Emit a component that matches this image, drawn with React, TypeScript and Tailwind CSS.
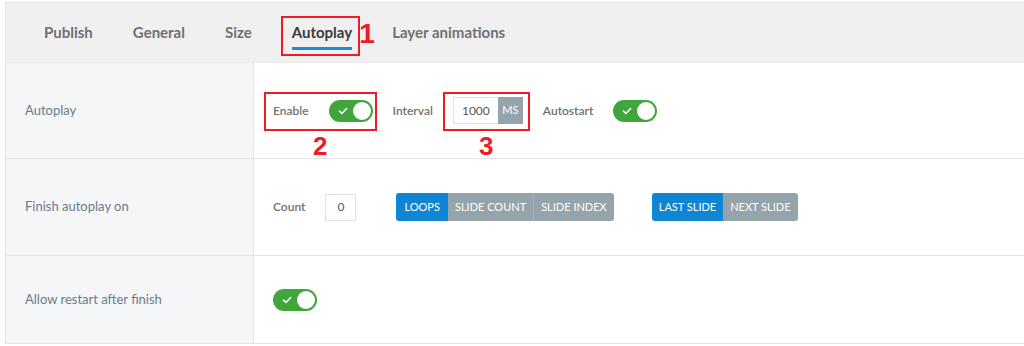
import React from 'react';

const font = { fontFamily: 'Lato, "Liberation Sans", Arial, sans-serif' };

const Toggle: React.FC = () => (
  <span className="relative inline-flex h-[22px] w-[44px] shrink-0 items-center rounded-full bg-[#40a63c]">
    <svg viewBox="0 0 12 10" className="absolute left-[9px] top-[7px] h-[8px] w-[10px]" fill="none">
      <path d="M1.5 5.2 L4.6 8 L10.5 1.8" stroke="#ffffff" strokeWidth="1.9" strokeLinecap="round" strokeLinejoin="round" />
    </svg>
    <span className="absolute right-[2px] top-[2px] h-[18px] w-[18px] rounded-full bg-white" />
  </span>
);

const Num: React.FC<{ n: string; className?: string }> = ({ n, className }) => (
  <span
    className={`absolute text-[26px] font-bold leading-none text-[#ee1c25] ${className ?? ''}`}
    style={{ fontFamily: '"Liberation Sans", Arial, sans-serif' }}
  >
    {n}
  </span>
);

const tabs = ['Publish', 'General', 'Size', 'Autoplay', 'Layer animations'];

const Row: React.FC<{ label: string; h: string; children: React.ReactNode }> = ({ label, h, children }) => (
  <div className={`flex ${h} border-b border-[#e1e4e8]`}>
    <div className="flex w-[248px] shrink-0 items-center border-r border-[#e1e4e8] bg-[#f5f6f8] pl-[19px] text-[13px] text-[#6b7a89]">
      {label}
    </div>
    <div className="flex flex-1 items-center pl-[19px]">{children}</div>
  </div>
);

const Label: React.FC<{ children: React.ReactNode }> = ({ children }) => (
  <span className="text-[12px] font-semibold text-[#707070]">{children}</span>
);

export default function App() {
  return (
    <div className="h-[346px] w-[1024px] overflow-hidden bg-white pl-[5px] pt-[2px]" style={font}>
      <div className="border-l border-t border-[#e3e3e3]">
        {/* tab bar */}
        <div className="flex h-[60px] items-center gap-[40px] border-b border-[#ebebeb] bg-[#f0f0f0] pl-[38px] pb-[1px]">
          {tabs.map(t =>
            t === 'Autoplay' ? (
              <span key={t} className="relative text-[15px] font-bold leading-[20px] text-[#3a3a3a]">
                {t}
                <span className="absolute left-0 right-0 top-[25px] h-[3px] bg-[#2388d6]" />
                <span className="absolute -bottom-[14px] -left-[11px] -right-[8px] -top-[6px] border-2 border-[#ee1c25]">
                  <span
                    className="absolute left-full top-[2px] ml-[1px] text-[28px] font-bold leading-none text-[#ee1c25]"
                    style={{ fontFamily: '"Liberation Sans", Arial, sans-serif' }}
                  >
                    1
                  </span>
                </span>
              </span>
            ) : (
              <span key={t} className="text-[15px] font-bold leading-[20px] text-[#707070]">
                {t}
              </span>
            )
          )}
        </div>

        <Row label="Autoplay" h="h-[96px]">
          <div className="flex items-center gap-5">
            <span className="relative flex items-center gap-5">
              <Label>Enable</Label>
              <Toggle />
              <span className="absolute -bottom-[9px] -left-[9px] -right-[4px] -top-[8px] border-2 border-[#ee1c25]">
                <Num n="2" className="left-0 right-0 top-full mt-[4px] text-center" />
              </span>
            </span>
            <Label>Interval</Label>
            <span className="relative flex">
              <span className="flex h-[27px] w-[45px] items-center justify-center border border-r-0 border-[#dfe3e6] text-[12px] text-[#555555]">
                1000
              </span>
              <span className="flex h-[27px] w-[25px] items-center justify-center bg-[#95a3ab] text-[11px] text-white">
                MS
              </span>
              <span className="absolute -bottom-[7px] -left-[10px] -right-[7px] -top-[5px] border-2 border-[#ee1c25]">
                <Num n="3" className="left-0 right-0 top-full mt-[4px] text-center" />
              </span>
            </span>
            <Label>Autostart</Label>
            <Toggle />
          </div>
        </Row>

        <Row label="Finish autoplay on" h="h-[97px]">
          <Label>Count</Label>
          <span className="ml-5 flex h-[27px] w-[31px] items-center justify-center border border-[#dfe3e6] text-[12px] text-[#555555]">
            0
          </span>
          <div className="ml-[40px] flex h-[28px] overflow-hidden rounded-[3px] text-[11px] text-white">
            <span className="flex items-center bg-[#0f85d4] px-[8px]">LOOPS</span>
            <span className="flex items-center border-r border-[#a9b4ba] bg-[#95a3aa] px-[7px]">SLIDE COUNT</span>
            <span className="flex items-center bg-[#95a3aa] px-[7px]">SLIDE INDEX</span>
          </div>
          <div className="ml-[38px] flex h-[28px] overflow-hidden rounded-[3px] text-[11px] text-white">
            <span className="flex items-center bg-[#0f85d4] px-[7px]">LAST SLIDE</span>
            <span className="flex items-center bg-[#95a3aa] px-[7px]">NEXT SLIDE</span>
          </div>
        </Row>

        <Row label="Allow restart after finish" h="h-[88px]">
          <Toggle />
        </Row>
      </div>
    </div>
  );
}
